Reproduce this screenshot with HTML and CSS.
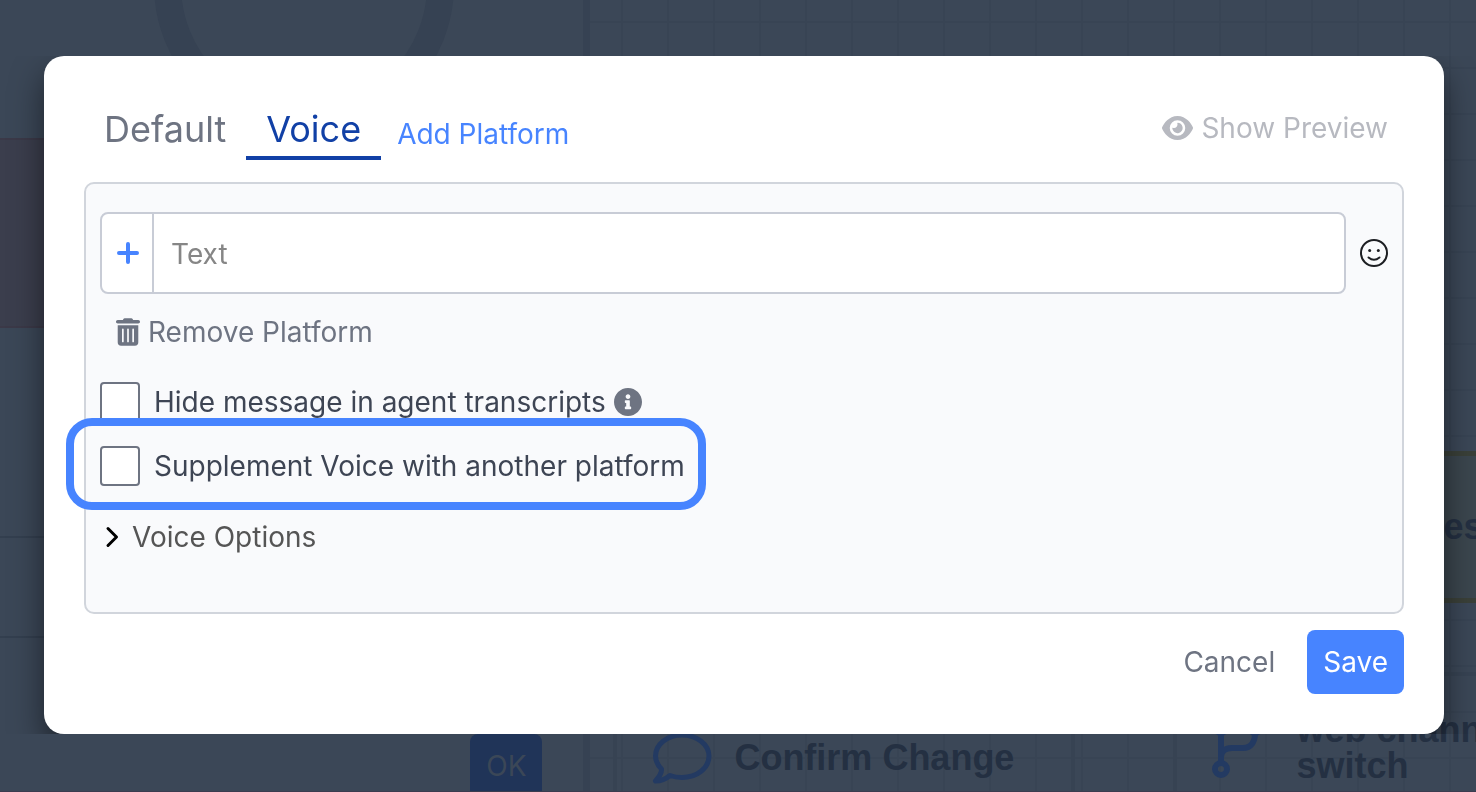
FILE: index.html
```html
<!DOCTYPE html>
<html lang="en">
<head>
    <meta charset="UTF-8">
    <meta name="viewport" content="width=device-width, initial-scale=1.0">
    <title>Edit Message</title>
    <link rel="stylesheet" href="styles.css">
</head>
<body>
    <!-- Page behind the dialog -->
    <div class="app">
        <div class="panel">
            <div class="ring"></div>
            <div class="panel-rows">
                <div class="row row-alert"></div>
                <div class="row row-large"></div>
                <div class="row row-small"></div>
            </div>
            <button class="ok-button" type="button">OK</button>
        </div>
        <div class="canvas">
            <div class="node node-warning"><span>es</span></div>
            <div class="node node-confirm">
                <svg class="node-icon" viewBox="0 0 60 52" fill="none" stroke="currentColor" stroke-width="5" stroke-linejoin="round">
                    <path d="M30 3C15 3 3.500 12.500 3.500 24C3.500 29 6 33.500 9.500 37C10 41 7 45 3.500 49C10 49 15 46 18 43.500C22 45 26 45.500 30 45.500C45 45.500 57 36 57 24C57 12.500 45 3 30 3Z"/>
                </svg>
                <span>Confirm Change</span>
            </div>
            <div class="node node-switch">
                <svg class="node-icon" viewBox="0 0 52 60" fill="none" stroke="currentColor" stroke-width="6">
                    <circle cx="9" cy="9" r="6"/>
                    <circle cx="43" cy="9" r="6"/>
                    <circle cx="9" cy="51" r="6"/>
                    <path d="M9 15V45M43 15C43 24 39 30 31 30H20C13 30 9 33 9 39"/>
                </svg>
                <span>web channel<br>switch</span>
            </div>
        </div>
    </div>

    <div class="overlay">
        <div class="modal-area">
            <div class="modal" role="dialog">
                <div class="modal-header">
                    <div class="tabs">
                        <button class="tab" type="button">Default</button>
                        <button class="tab active" type="button">Voice</button>
                        <a class="add-platform" href="#">Add Platform</a>
                    </div>
                    <button class="preview-button" type="button">
                        <svg class="icon-eye" viewBox="0 0 576 512" fill="currentColor">
                            <path d="M288 32c-80.800 0-145.500 36.800-192.600 80.600C48.600 156 17.300 208 2.500 243.700c-3.300 7.900-3.300 16.700 0 24.600C17.300 304 48.600 356 95.400 399.400C142.500 443.200 207.200 480 288 480s145.500-36.800 192.600-80.600c46.800-43.500 78.100-95.400 93-131.100c3.300-7.900 3.300-16.700 0-24.600c-14.900-35.700-46.200-87.700-93-131.100C433.500 68.800 368.800 32 288 32zM144 256a144 144 0 1 1 288 0 144 144 0 1 1 -288 0zm144-64c0 35.300-28.700 64-64 64c-7.100 0-13.900-1.200-20.300-3.300c-5.500-1.800-11.900 1.600-11.700 7.400c.3 6.900 1.300 13.800 3.200 20.700c13.700 51.200 66.400 81.600 117.600 67.900s81.600-66.400 67.900-117.600c-11.100-41.500-47.800-69.400-88.600-71.100c-5.800-.2-9.200 6.100-7.400 11.700c2.100 6.400 3.300 13.200 3.300 20.300z"/>
                        </svg>
                        Show Preview
                    </button>
                </div>

                <div class="message-box">
                    <div class="text-row">
                        <div class="input-group">
                            <button class="plus-button" type="button" aria-label="Add">
                                <svg viewBox="0 0 24 24" fill="none" stroke="currentColor" stroke-width="4" stroke-linecap="round">
                                    <path d="M12 3V21M3 12H21"/>
                                </svg>
                            </button>
                            <input type="text" placeholder="Text" aria-label="Text">
                        </div>
                        <button class="emoji-button" type="button" aria-label="Emoji">
                            <svg viewBox="0 0 28 28" fill="none" stroke="currentColor" stroke-width="2" stroke-linecap="round">
                                <circle cx="14" cy="14" r="13"/>
                                <path d="M8.500 18.500Q14 23 19.500 18.500"/>
                                <circle cx="9.700" cy="11.500" r="1.500" fill="currentColor" stroke="none"/>
                                <circle cx="18.300" cy="11.500" r="1.500" fill="currentColor" stroke="none"/>
                            </svg>
                        </button>
                    </div>

                    <button class="remove-button" type="button">
                        <svg class="icon-trash" viewBox="0 0 448 512" fill="currentColor">
                            <path d="M135.200 17.700L128 32H32C14.300 32 0 46.300 0 64S14.300 96 32 96H416c17.700 0 32-14.300 32-32s-14.300-32-32-32H320l-7.200-14.300C307.400 6.800 296.300 0 284.200 0H163.800c-12.100 0-23.200 6.800-28.600 17.700z"/>
                            <path d="M32 448a64 64 0 0 0 64 64h256a64 64 0 0 0 64-64V128H32zm272-240a16 16 0 0 1 32 0v224a16 16 0 0 1-32 0zm-96 0a16 16 0 0 1 32 0v224a16 16 0 0 1-32 0zm-96 0a16 16 0 0 1 32 0v224a16 16 0 0 1-32 0z"/>
                        </svg>
                        Remove Platform
                    </button>

                    <div class="check-row">
                        <input type="checkbox" id="hide">
                        <label for="hide">Hide message in agent transcripts</label>
                        <svg class="icon-info" viewBox="8 8 496 496" fill="currentColor">
                            <path d="M256 8C119.043 8 8 119.083 8 256c0 136.997 111.043 248 248 248s248-111.003 248-248C504 119.083 392.957 8 256 8zm0 110c23.196 0 42 18.804 42 42s-18.804 42-42 42-42-18.804-42-42 18.804-42 42-42zm56 254c0 6.627-5.373 12-12 12h-88c-6.627 0-12-5.373-12-12v-24c0-6.627 5.373-12 12-12h12v-64h-12c-6.627 0-12-5.373-12-12v-24c0-6.627 5.373-12 12-12h64c6.627 0 12 5.373 12 12v100h12c6.627 0 12 5.373 12 12v24z"/>
                        </svg>
                    </div>
                    <div class="check-row highlighted">
                        <input type="checkbox" id="supplement">
                        <label for="supplement">Supplement Voice with another platform</label>
                    </div>

                    <button class="options-toggle" type="button">
                        <svg viewBox="0 0 14 22" fill="none" stroke="currentColor" stroke-width="3" stroke-linecap="round" stroke-linejoin="round">
                            <path d="M3 2.500L11.500 11L3 19.500"/>
                        </svg>
                        Voice Options
                    </button>
                </div>

                <div class="modal-footer">
                    <button class="cancel-button" type="button">Cancel</button>
                    <button class="save-button" type="button">Save</button>
                </div>
            </div>
        </div>
    </div>
</body>
</html>
```

FILE: styles.css
```css
* {
    box-sizing: border-box;
}

body, html {
    height: 100%;
    margin: 0;
    overflow: hidden;
    font-family: Inter, "Liberation Sans", sans-serif;
    font-size: 28px;
    line-height: 40px;
}

button, input {
    font: inherit;
}

button {
    padding: 0;
    border: none;
    background: none;
    cursor: pointer;
}

svg {
    display: block;
    flex-shrink: 0;
}

/* Page behind the dialog */
.app {
    display: flex;
    height: 100vh;
    background-color: #3b4757;
    border-bottom: 1px solid #3b3c4f;
}

.panel {
    position: relative;
    width: 40%;
    overflow: hidden;
    display: flex;
    flex-direction: column;
    border-right: 7px solid #364253;
}

.ring {
    position: absolute;
    top: -165px;
    left: 154px;
    width: 300px;
    height: 300px;
    border: 27px solid #364253;
    border-radius: 50%;
}

.panel-rows {
    margin-top: 138px;
    background-color: #3b4757;
}

.row {
    border-bottom: 2px solid #333f4f;
}

.row-alert {
    height: 190px;
    background-color: #3b3e4d;
    border-top: 2px solid #3b3948;
    border-bottom-color: #3b3948;
}

.row-large {
    height: 210px;
}

.row-small {
    height: 100px;
}

.ok-button {
    flex-shrink: 0;
    align-self: flex-end;
    width: 72px;
    height: 64px;
    margin: 96px 41px 0 0;
    border-radius: 8px;
    background-color: #203458;
    color: #3b4757;
}

.canvas {
    position: relative;
    flex: 1;
    overflow: hidden;
    background-image: linear-gradient(to right, #384454 2px, transparent 2px), linear-gradient(#384454 2px, transparent 2px);
    background-size: 46px 46px;
    background-position: 31px 21px;
}

.node {
    position: absolute;
    display: flex;
    align-items: center;
    border: 4px solid #374353;
    font-family: "Liberation Sans", Arial, sans-serif;
    font-size: 36px;
    font-weight: bold;
    line-height: 36px;
    white-space: nowrap;
    color: #243042;
}

.node-icon {
    color: #233a62;
}

.node-warning {
    top: 451px;
    left: 800px;
    width: 300px;
    height: 152px;
    padding-left: 48px;
    border: 5px solid #3a4039;
    background-color: #3b464e;
}

.node-confirm {
    top: 672px;
    left: 23px;
    width: 462px;
    height: 172px;
    padding-left: 35px;
    gap: 22px;
}

.node-switch {
    top: 672px;
    left: 583px;
    width: 460px;
    height: 152px;
    padding-left: 35px;
    gap: 32px;
}

.node-confirm .node-icon {
    width: 60px;
    height: 52px;
}

.node-switch .node-icon {
    width: 52px;
    height: 60px;
}

/* Dialog */
.overlay {
    position: fixed;
    inset: 0;
    padding-top: 56px;
}

/* cuts the shadow off above and below the dialog */
.modal-area {
    overflow: hidden;
    padding: 0 32px 0 44px;
}

.modal {
    padding: 40px;
    border-radius: 20px;
    background-color: white;
    box-shadow: 0 16px 32px rgba(0, 0, 0, 0.5);
}

.modal-header {
    display: flex;
    justify-content: space-between;
    align-items: flex-start;
    margin-bottom: 22px;
}

.tabs {
    display: flex;
    align-items: center;
}

.tab {
    height: 64px;
    padding: 6px 20px 0;
    border-bottom: 4px solid transparent;
    font-size: 36px;
    color: #6e7482;
}

.tab.active {
    border-bottom-color: #1140a6;
    color: #1140a6;
}

.add-platform {
    margin: 12px 0 0 16px;
    color: #4784ff;
    text-decoration: none;
}

.preview-button {
    display: flex;
    align-items: center;
    gap: 8px;
    margin: 12px 16px 0 0;
    color: #b7b9c0;
}

.icon-eye {
    width: 31px;
    height: 28px;
}

.message-box {
    padding: 28px 14px 55px;
    border: 2px solid #d1d5dc;
    border-radius: 10px;
    background-color: #f9fafc;
}

.text-row {
    display: flex;
    align-items: center;
    gap: 14px;
}

.input-group {
    flex: 1;
    display: flex;
    height: 82px;
    border: 2px solid #c8ccd6;
    border-radius: 8px;
    background-color: white;
    overflow: hidden;
}

.plus-button {
    display: flex;
    align-items: center;
    justify-content: center;
    width: 52px;
    padding-left: 2px;
    border-right: 2px solid #c8ccd6;
    color: #4784ff;
}

.plus-button svg {
    width: 24px;
    height: 24px;
}

.input-group input {
    flex: 1;
    min-width: 0;
    padding: 2px 17px 0;
    border: none;
    outline: none;
    background: none;
}

.input-group input::placeholder {
    color: #868686;
    opacity: 1;
}

.emoji-button {
    color: #1c1e22;
}

.emoji-button svg {
    width: 28px;
    height: 28px;
}

.remove-button {
    display: flex;
    align-items: center;
    gap: 8px;
    margin: 18px 0 30px 16px;
    color: #6e7482;
}

.icon-trash {
    width: 24px;
    height: 28px;
}

.check-row {
    position: relative;
    display: flex;
    align-items: center;
    width: fit-content;
    margin-bottom: 24px;
    color: #3e4554;
}

.check-row input {
    appearance: none;
    width: 40px;
    height: 40px;
    margin: 0 14px 0 0;
    border: 2px solid #6e7482;
    border-radius: 4px;
    background-color: white;
}

.icon-info {
    width: 28px;
    height: 28px;
    margin-left: 8px;
    color: #6e7482;
}

.highlighted::after {
    content: "";
    position: absolute;
    inset: -28px -21px -24px -34px;
    border: 8px solid #4784ff;
    border-radius: 26px;
    pointer-events: none;
}

.options-toggle {
    display: flex;
    align-items: center;
    gap: 13px;
    margin: 31px 0 0 5px;
    color: #555555;
}

.options-toggle svg {
    width: 14px;
    height: 22px;
    color: black;
}

.modal-footer {
    display: flex;
    justify-content: flex-end;
    gap: 32px;
    margin-top: 16px;
}

.cancel-button {
    color: #6e7482;
}

.save-button {
    height: 64px;
    padding: 0 16px;
    border-radius: 8px;
    background-color: #4784ff;
    color: white;
}
```
